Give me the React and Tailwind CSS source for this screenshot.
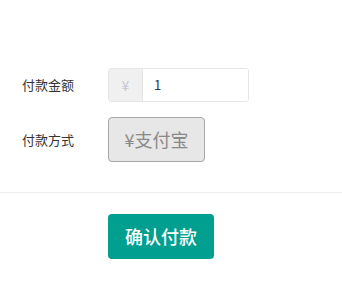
import React, { useState } from 'react';

const font = { fontFamily: '"Noto Sans CJK SC", "Noto Sans", sans-serif' };

export default function App() {
  const [amount, setAmount] = useState('1');

  return (
    <div className="w-[342px] h-[284px] bg-white pt-[68px]" style={font}>
      {/* 付款金额 */}
      <div className="flex items-center">
        <label className="w-[108px] pl-[22px] text-[13px] text-[#333]">付款金额</label>
        <div className="flex w-[141px] h-[34px] border border-[#e6e6e6] rounded-[3px] overflow-hidden">
          <span className="w-[34px] flex items-center justify-center bg-[#f0f0f0] border-r border-[#e6e6e6] text-[14px] text-[#c2c9d6]">¥</span>
          <input
            value={amount}
            onChange={(e) => setAmount(e.target.value)}
            className="flex-1 min-w-0 pl-[11px] text-[13px] text-[#2a3550] outline-none bg-white"
          />
        </div>
      </div>

      {/* 付款方式 */}
      <div className="flex items-center mt-[15px]">
        <label className="w-[108px] pl-[22px] text-[13px] text-[#333]">付款方式</label>
        <button className="w-[97px] h-[45px] border border-[#a6a6a6] bg-[#e7e7e7] rounded-[4px] text-[18px] text-[#8a8a8a]">
          ¥支付宝
        </button>
      </div>

      <div className="mt-[30px] h-px bg-[#eeeeee]" />

      <div className="mt-[21px] pl-[108px]">
        <button className="w-[106px] h-[45px] rounded-[4px] bg-[#009f8f] text-white text-[18px] font-medium">
          确认付款
        </button>
      </div>
    </div>
  );
}
